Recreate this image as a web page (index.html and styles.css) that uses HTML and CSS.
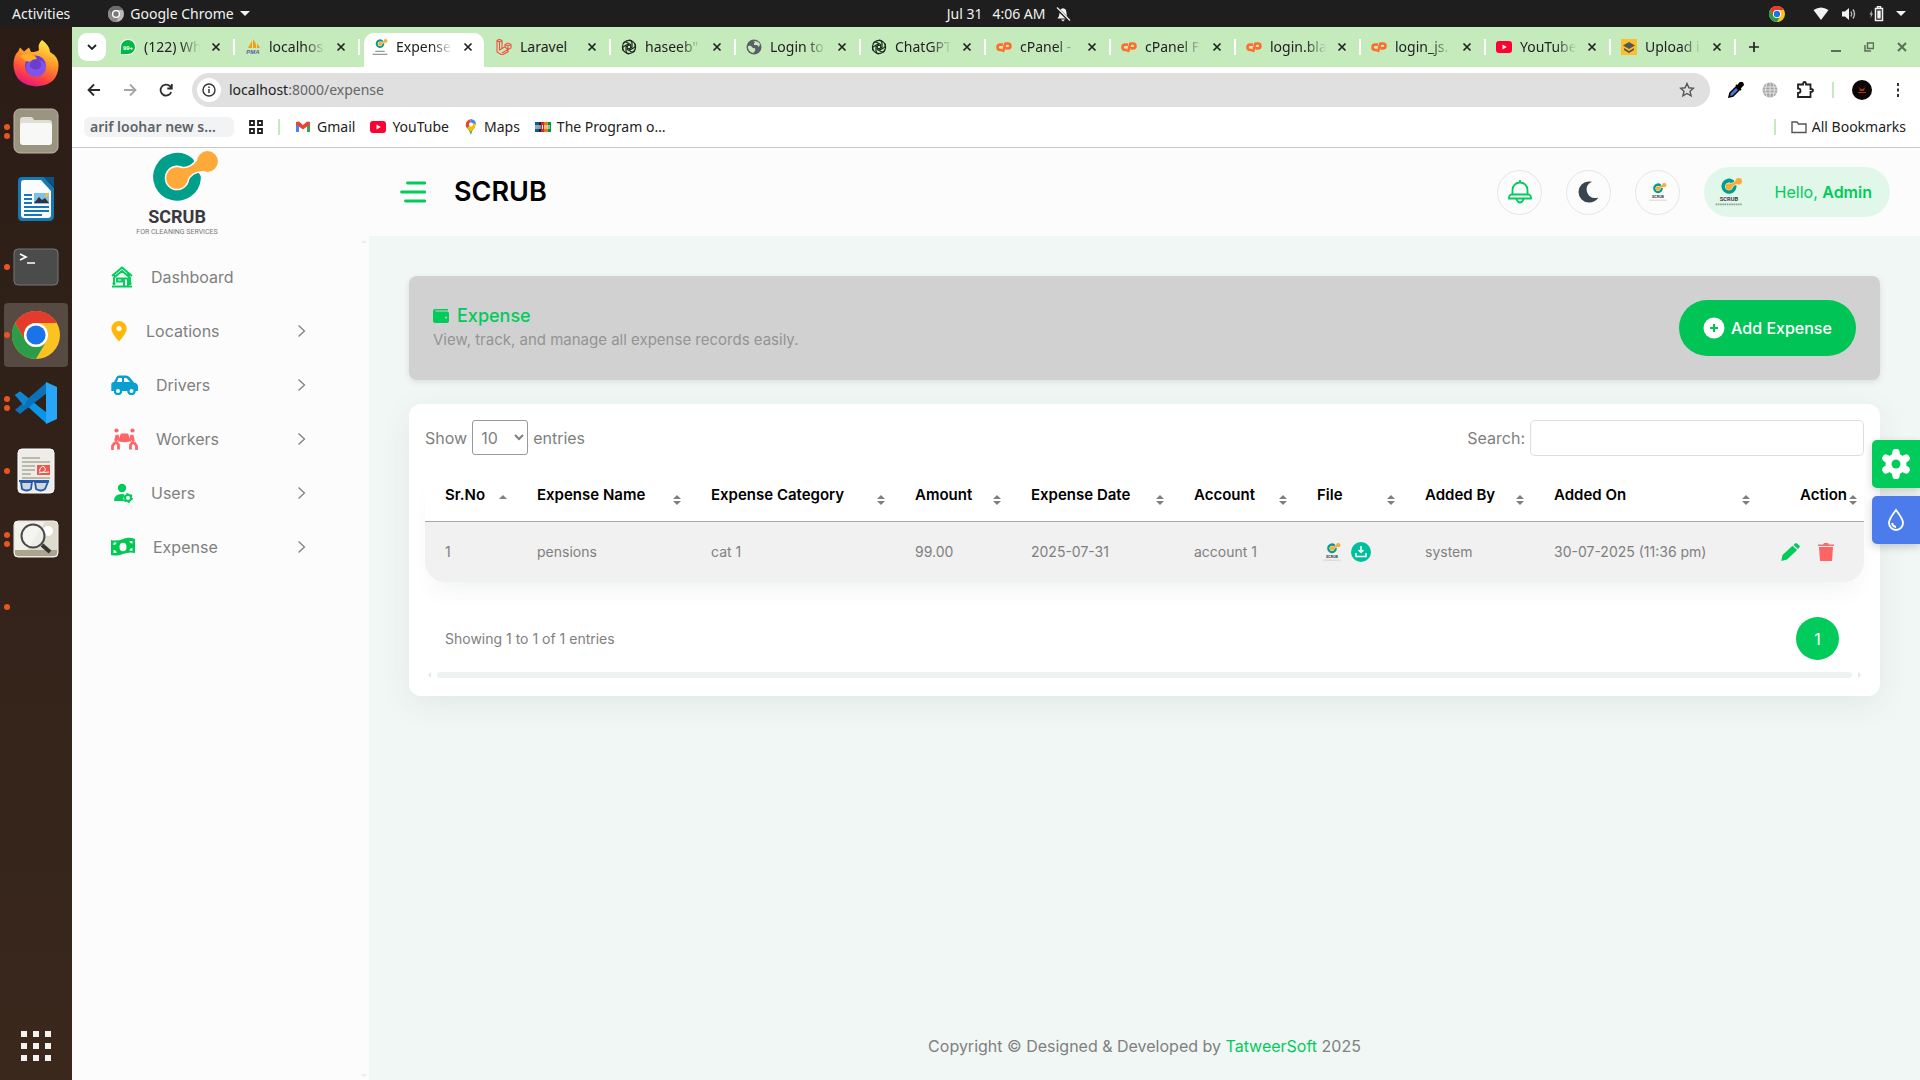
FILE: index.html
```html
<!DOCTYPE html>
<html lang="en">
<head>
<meta charset="utf-8">
<title>Expense</title>
<link rel="stylesheet" href="styles.css">
</head>
<body>
<svg class="sprite" aria-hidden="true">
  <symbol id="mark" viewBox="0 0 88 62">
    <path d="M55 12A17.6 17.6 0 1 0 61.600 27" fill="none" stroke="#009f8b" stroke-width="12.600" stroke-linecap="round"/>
    <g fill="#fcfcfc" stroke="#fcfcfc" stroke-width="3"><circle cx="44" cy="27" r="10.800"/><path d="M48 17Q57 19 64.500 9L72 20Q58 19 54 30Z"/></g>
    <g fill="#ffa93a"><circle cx="44" cy="27" r="10.800"/><circle cx="74.500" cy="10.500" r="10.400"/><path d="M48 17Q57 19 64.500 9L72 20Q58 19 54 30Z"/></g>
  </symbol>
  <symbol id="chrome" viewBox="0 0 48 48">
    <circle cx="24" cy="24" r="24" fill="#fbc322"/>
    <path d="M24 12H44.800A24 24 0 0 0 3.200 12L13.600 30A12 12 0 0 1 24 12Z" fill="#e33b2e"/>
    <path d="M3.200 12A24 24 0 0 0 24 48L34.400 30A12 12 0 0 1 13.600 30Z" fill="#2c9c4a"/>
    <circle cx="24" cy="24" r="12" fill="#fff"/><circle cx="24" cy="24" r="9.600" fill="#1a73e8"/>
  </symbol>
  <symbol id="chrome-gray" viewBox="0 0 48 48">
    <circle cx="24" cy="24" r="24" fill="#b8b8b8"/>
    <path d="M24 12H44.800A24 24 0 0 0 3.200 12L13.600 30A12 12 0 0 1 24 12Z" fill="#6a6a6a"/>
    <path d="M3.200 12A24 24 0 0 0 24 48L34.400 30A12 12 0 0 1 13.600 30Z" fill="#888"/>
    <circle cx="24" cy="24" r="12" fill="#fff"/><circle cx="24" cy="24" r="8" fill="#777"/>
  </symbol>
  <symbol id="x" viewBox="0 0 16 16"><path d="M4.500 4.500l7 7m0-7l-7 7" stroke="#222" stroke-width="1.700"/></symbol>
  <symbol id="openai" viewBox="0 0 16 16">
    <g fill="none" stroke="#1d2b1d" stroke-width="1.200">
      <path id="petal" d="M8 1.200a3 3 0 0 1 3 2.900v4.200L8 10"/>
      <use href="#petal" transform="rotate(60 8 8)"/><use href="#petal" transform="rotate(120 8 8)"/><use href="#petal" transform="rotate(180 8 8)"/><use href="#petal" transform="rotate(240 8 8)"/><use href="#petal" transform="rotate(300 8 8)"/>
      <circle cx="8" cy="8" r="6.600"/>
    </g>
  </symbol>
  <symbol id="cpanel" viewBox="0 0 16 16">
    <g fill="none" stroke="#ff6c2c" stroke-width="2.600" stroke-linejoin="round"><path d="M7 5.600H4.200a2.600 2.600 0 0 0 0 5.400H6"/><path d="M7 13L9.300 4.500H12a2.400 2.400 0 0 1 0 4.900H9.500"/></g>
  </symbol>
  <symbol id="youtube" viewBox="0 0 16 16"><rect y="2" width="16" height="12" rx="3" fill="#ff0033"/><path d="M6.500 5.500v5L10.800 8z" fill="#fff"/></symbol>
  <symbol id="chev" viewBox="0 0 10 14"><path d="M1.500 1.500L7.500 7l-6 5.500" fill="none" stroke="#808080" stroke-width="1.300"/></symbol>
</svg>

<header class="topbar">
  <div class="topbar-left">
    <span>Activities</span>
    <span class="app-menu"><svg width="16" height="16"><use href="#chrome-gray"/></svg>Google Chrome<svg width="10" height="6" viewBox="0 0 10 6"><path d="M0 0h10L5 5z" fill="#f2f2f2"/></svg></span>
  </div>
  <div class="clock"><span>Jul 31</span><span>4:06 AM</span>
    <svg width="16" height="16" viewBox="0 0 16 16"><path d="M2.500 12.500Q4.500 10.500 4.500 7Q4.500 2.500 8 2.200Q11.500 2.500 11.500 7Q11.500 10.500 13.500 12.500Z" fill="#f2f2f2"/><path d="M6 13.500h4l-2 2z" fill="#f2f2f2"/><path d="M1 1.500l14 13.500" stroke="#1e1e1e" stroke-width="3"/><path d="M2 1.500l13 13" stroke="#f2f2f2" stroke-width="1.300"/></svg>
  </div>
  <div class="tray">
    <svg class="tray-chrome" width="16" height="16"><use href="#chrome"/></svg>
    <svg width="16" height="14" viewBox="0 0 16 14"><path d="M.5 3Q8-2 15.500 3L8 13z" fill="#f2f2f2"/></svg>
    <svg width="16" height="14" viewBox="0 0 16 14"><path d="M1 4.500h3L8 1v12L4 9.500H1z" fill="#f2f2f2"/><path d="M10 4.500q1.500 2.500 0 5M12 2.500q3 4.500 0 9" stroke="#bbb" fill="none" stroke-width="1.400"/></svg>
    <svg width="15" height="16" viewBox="0 0 15 16"><path d="M3 4L.5 8.500H2L1.500 12 4 7.500H2.500z" fill="#bbb"/><path d="M6.500 2.500h7v12h-7zM8.500.5h3v2h-3z" fill="none" stroke="#f2f2f2" stroke-width="1.500"/><path d="M8.300 4.500h3.400v8H8.300z" fill="#f2f2f2"/></svg>
    <svg width="10" height="6" viewBox="0 0 10 6"><path d="M0 0h10L5 5z" fill="#f2f2f2"/></svg>
  </div>
</header>

<div class="desktop">
<nav class="dock" aria-label="Dock">
  <div class="dock-item">
    <svg width="48" height="48" viewBox="0 0 48 48"><defs><linearGradient id="ff" x1=".7" y1="0" x2=".3" y2="1"><stop offset="0" stop-color="#fff04a"/><stop offset=".4" stop-color="#ff9a28"/><stop offset=".75" stop-color="#ff4040"/><stop offset="1" stop-color="#e0128a"/></linearGradient></defs>
      <path d="M30 1Q38 7 38 13Q47 18 46.500 27Q46 46 24.500 47.500Q3 46 1.500 27Q1 17 6.500 12L8 8.500L12 12.500L17 8.500L19 13Q25 13 27 11Q25.500 5 30 1Z" fill="url(#ff)"/><circle cx="23.500" cy="27" r="10.500" fill="#6a3fd0"/><path d="M8 17Q16 13 23 17L25 20Q20 20 18 23Q12 22 8 17Z" fill="#ffae2c"/><path d="M14 29q0-7 6-7q-5 5 1 8q6 2 8-3q1-4-3-6q9 1 8 9q-2 8-10 8t-10-9z" fill="#8b5cf0" opacity=".7"/></svg>
  </div>
  <div class="dock-item"><span class="dots"><i></i><i></i></span>
    <svg width="46" height="46" viewBox="0 0 46 46"><rect x="1" y="1" width="44" height="44" rx="6" fill="#9b9480" stroke="#bbb5a5"/><path d="M7 12q0-3 3-3h8q2 0 3 3h15q3 0 3 3v19H7z" fill="#e0ddd2"/><rect x="7" y="15" width="32" height="22" rx="3" fill="#f8f8f7"/></svg>
  </div>
  <div class="dock-item">
    <svg width="38" height="46" viewBox="0 0 38 46"><path d="M5 1h22l10 11v28q0 5-5 5H5q-4 0-4-5V5q0-4 4-4z" fill="#1479b5"/><path d="M27 1h10v10z" fill="#0c5385"/><path d="M4 7q0-3 3-3h17l10 11v24q0 3-3 3H7q-3 0-3-3z" fill="#fcfcfc"/><path d="M7 19h8M7 23h8M7 27h8M7 31h25M7 35h25M7 39h18" stroke="#1479b5" stroke-width="2"/><rect x="17" y="17" width="15" height="11" fill="#7cc1ed"/><path d="M17 27l5-6 3 3 3-2 4 5z" fill="#333"/><circle cx="30" cy="19" r="2" fill="#f6bd29"/></svg>
  </div>
  <div class="dock-item"><span class="dots"><i></i></span>
    <svg width="46" height="38" viewBox="0 0 46 38"><rect x="1" y="1" width="44" height="36" rx="4" fill="#4b4b4b" stroke="#777"/><path d="M7 6l6 3-6 3M14 15h8" stroke="#fff" stroke-width="1.700" fill="none"/></svg>
  </div>
  <div class="dock-item active"><span class="dots"><i></i></span><svg width="48" height="48"><use href="#chrome"/></svg></div>
  <div class="dock-item"><span class="dots"><i></i><i></i></span>
    <svg width="44" height="44" viewBox="0 0 44 44"><path d="M1 14l5-3.500L33 32v11z" fill="#0796e8"/><path d="M1 29l5 4L33 12V1z" fill="#0b72b8"/><path d="M1 14l5-3.500L14 17l-4 8z" fill="#0d87d2"/><path d="M32 1l11 5v32l-11 5z" fill="#27a7f5"/></svg>
  </div>
  <div class="dock-item"><span class="dots"><i></i></span>
    <svg width="38" height="46" viewBox="0 0 38 46"><rect x="1" y="1" width="36" height="44" rx="4" fill="#ececea" stroke="#fff"/><path d="M5 10h18M5 14h28M5 18h13M5 22h13M5 26h9M5 30h28" stroke="#bdb8a9" stroke-width="2"/><rect x="20" y="17" width="13" height="10" fill="#f2564a"/><path d="M22 25q8-1 6-5t-5 1 9 3" stroke="#fff" fill="none"/><path d="M2 33h30M4 34l1 7q5 3 9 0l1-7zM18 34l1 7q5 3 9 0l3-7z" fill="#cfd6dc" stroke="#2359a8" stroke-width="1.800"/></svg>
  </div>
  <div class="dock-item"><span class="dots"><i></i><i></i></span>
    <svg width="46" height="38" viewBox="0 0 46 38"><rect x="1" y="1" width="44" height="36" rx="4" fill="#dedccf" stroke="#f3f3ee"/><path d="M2 2h30L14 30H2z" fill="#f1f0e9"/><path d="M2 30h42v3q0 3-3 3H5q-3 0-3-3z" fill="#aaa58d"/><circle cx="35" cy="11" r="5" fill="#fff"/><circle cx="20" cy="16" r="11.500" fill="#f5f5f2" fill-opacity=".7" stroke="#4a4a4a" stroke-width="2"/><path d="M29 25l8 7" stroke="#333" stroke-width="4"/></svg>
  </div>
  <div class="dock-item"><span class="dots"><i></i></span></div>
  <button class="apps" aria-label="Show applications"><svg width="30" height="30" viewBox="0 0 30 30"><path d="M3 0v30M15 0v30M27 0v30" stroke="#f2f2f0" stroke-width="6" stroke-dasharray="6 6"/></svg></button>
</nav>

<div class="browser">
  <div class="tabstrip">
    <button class="tab-search" aria-label="Search tabs"><svg width="10" height="6" viewBox="0 0 10 6"><path d="M1 1l4 4 4-4" fill="none" stroke="#222" stroke-width="1.800"/></svg></button>
    <div class="tab"><svg width="16" height="16" viewBox="0 0 16 16"><circle cx="8" cy="8" r="8" fill="#fff"/><path d="M1 15V8a7 7 0 1 1 7 7z" fill="#00b944"/><text x="8" y="11" text-anchor="middle" class="fav-text">99+</text></svg><span>(122) Wh</span><svg width="16" height="16"><use href="#x"/></svg></div>
    <div class="tab"><svg width="16" height="16" viewBox="0 0 16 16"><path d="M3 9L7 2v7zM8 9V0q4 5 3 9zM12 9V4l3 5z" fill="#f89c0e"/><text x="8" y="15" text-anchor="middle" class="pma-text">PMA</text></svg><span>localhos</span><svg width="16" height="16"><use href="#x"/></svg></div>
    <div class="tab current"><svg width="16" height="16" viewBox="0 0 88 88"><use href="#mark" width="88" height="62"/><path d="M18 68h52M4 84h80" stroke="#999" stroke-width="7"/></svg><span>Expense</span><svg width="16" height="16"><use href="#x"/></svg></div>
    <div class="tab"><svg width="16" height="16" viewBox="0 0 16 16"><path d="M1 1.500L3.500.3 6 1.500v8L9 8V5.500l3-1.500 3 1.500V9l-3 1.600v2.200L6 16l-5-3zM1 1.500L3.500 3 6 1.500M3.500 3v8L6 9.500M9 5.500L12 7l3-1.500M12 7v3.500L6 14M9 8l3 2.500" fill="none" stroke="#f0513f" stroke-width="1.100"/></svg><span class="short">Laravel</span><svg width="16" height="16"><use href="#x"/></svg></div>
    <div class="tab"><svg width="16" height="16"><use href="#openai"/></svg><span>haseeb"</span><svg width="16" height="16"><use href="#x"/></svg></div>
    <div class="tab"><svg width="16" height="16" viewBox="0 0 16 16"><circle cx="8" cy="8" r="7.500" fill="#5a5f66"/><path d="M2 7q3-1 4 1t3 1q1 3-2 5q-4-1-5-5zM7 2q2 0 2 2H8v2h3l2 2 1-3Q12 2 8 2z" fill="#c5ebbd"/></svg><span>Login to</span><svg width="16" height="16"><use href="#x"/></svg></div>
    <div class="tab"><svg width="16" height="16"><use href="#openai"/></svg><span>ChatGPT</span><svg width="16" height="16"><use href="#x"/></svg></div>
    <div class="tab"><svg width="16" height="16"><use href="#cpanel"/></svg><span>cPanel -</span><svg width="16" height="16"><use href="#x"/></svg></div>
    <div class="tab"><svg width="16" height="16"><use href="#cpanel"/></svg><span>cPanel F</span><svg width="16" height="16"><use href="#x"/></svg></div>
    <div class="tab"><svg width="16" height="16"><use href="#cpanel"/></svg><span>login.bla</span><svg width="16" height="16"><use href="#x"/></svg></div>
    <div class="tab"><svg width="16" height="16"><use href="#cpanel"/></svg><span>login_js.</span><svg width="16" height="16"><use href="#x"/></svg></div>
    <div class="tab"><svg width="16" height="16"><use href="#youtube"/></svg><span>YouTube</span><svg width="16" height="16"><use href="#x"/></svg></div>
    <div class="tab"><svg width="16" height="16" viewBox="0 0 16 16"><rect width="16" height="16" fill="#fdbf2d"/><path d="M8 3l6 3.500L8 10 2 6.500zM3 9l5 3 5-3v2l-5 3-5-3z" fill="#555"/></svg><span>Upload i</span><svg width="16" height="16"><use href="#x"/></svg></div>
    <button class="new-tab" aria-label="New tab"><svg width="12" height="12" viewBox="0 0 12 12"><path d="M6 1v10M1 6h10" stroke="#222" stroke-width="1.700"/></svg></button>
    <div class="win-buttons">
      <svg width="10" height="10" viewBox="0 0 10 10"><path d="M0 9h10" stroke="#5b6e58" stroke-width="2"/></svg>
      <svg width="10" height="10" viewBox="0 0 10 10"><path d="M3.500 1h6v5.500h-6zM1 3v6h6" fill="none" stroke="#5b6e58" stroke-width="1.500"/></svg>
      <svg width="10" height="10" viewBox="0 0 10 10"><path d="M1 1l8 8m0-8L1 9" stroke="#5b6e58" stroke-width="2"/></svg>
    </div>
  </div>

  <div class="toolbar">
    <div class="nav-buttons">
      <svg width="16" height="16" viewBox="0 0 16 16"><path d="M14 8H3M8 2.500L2.500 8 8 13.500" fill="none" stroke="#2b2b2b" stroke-width="1.800"/></svg>
      <svg width="16" height="16" viewBox="0 0 16 16"><path d="M2 8h11M8 2.500L13.500 8 8 13.500" fill="none" stroke="#a6a6a6" stroke-width="1.800"/></svg>
      <svg width="16" height="16" viewBox="0 0 16 16"><path d="M13.200 10A5.500 5.500 0 1 1 12 4.200L13.500 6M13.800 2v4.500H9.300" fill="none" stroke="#2b2b2b" stroke-width="1.800"/></svg>
    </div>
    <div class="address">
      <span class="info"><svg width="14" height="14" viewBox="0 0 14 14"><circle cx="7" cy="7" r="6" fill="none" stroke="#333" stroke-width="1.400"/><path d="M7 6v4M7 3.500V5" stroke="#333" stroke-width="1.500"/></svg></span>
      <span class="url">localhost<span>:8000/expense</span></span>
      <svg width="16" height="16" viewBox="0 0 16 16"><path d="M8 1.500l1.900 4.300 4.600.4-3.500 3.100 1.100 4.600L8 11.500l-4.100 2.400L5 9.300 1.500 6.200l4.600-.4z" fill="none" stroke="#555" stroke-width="1.400"/></svg>
    </div>
    <div class="extensions">
      <svg width="16" height="16" viewBox="0 0 16 16"><path d="M1 15l1-4 6-6 3 3-6 6z" fill="#4a7be0" stroke="#000" stroke-width="1.500"/><path d="M8 3l5 5M9 5l3-4q3-1 3 2l-4 4z" stroke="#000" fill="#000" stroke-width="1.800"/></svg>
      <svg width="16" height="16" viewBox="0 0 16 16"><circle cx="8" cy="8" r="7.500" fill="#a5a5a5"/><path d="M1 5h14M0 8h16M1 11h14M8 0v16M5 1q-3 7 0 14M11 1q3 7 0 14" fill="none" stroke="#eee" stroke-width=".8"/></svg>
      <svg width="18" height="18" viewBox="0 0 18 18"><path d="M2 3.500h5q0-2.500 1.500-2.500T10 3.500h4.500V8q2.500 0 2.500 1.500T14.500 11v5H2v-4q2.500 0 2.500-2.300T2 7.500z" fill="none" stroke="#222" stroke-width="1.800"/></svg>
      <i class="bar"></i>
      <svg width="20" height="20" viewBox="0 0 20 20"><circle cx="10" cy="10" r="10" fill="#0b0604"/><path d="M7 7l2 2h2l2-2-1 4H8zM6 12h8v1H6z" fill="#a83418"/></svg>
      <svg width="16" height="16" viewBox="0 0 16 16"><path d="M7 1h2v3H7zM7 6.500h2v3H7zM7 12h2v3H7z" fill="#333"/></svg>
    </div>
  </div>

  <div class="bookmarks">
    <span class="chip">arif loohar new s…</span>
    <svg class="tab-grid" width="14" height="14" viewBox="0 0 14 14"><path d="M1 1h4v4H1zM9 1h4v4H9zM1 9h4v4H1zM9 9h4v4H9z" fill="none" stroke="#222" stroke-width="1.800"/></svg>
    <i class="bar"></i>
    <a href="#gmail"><svg width="16" height="16" viewBox="0 0 16 16"><path d="M1 3v10h3V6z" fill="#4285f4"/><path d="M15 3v10h-3V6z" fill="#34a853"/><path d="M1 3l3-.5L8 6l4-3.500L15 3v2.500L8 10.500 1 5.500z" fill="#ea4335"/></svg>Gmail</a>
    <a href="#youtube-home"><svg width="16" height="16"><use href="#youtube"/></svg>YouTube</a>
    <a href="#maps"><svg width="14" height="16" viewBox="0 0 14 16"><path d="M7 16Q6 12 3 9Q1 6 3 3L11 8Q8 11 7 16Z" fill="#34a853"/><path d="M2 4Q3 1 7 0L5 6 3 9Q1 7 2 4Z" fill="#ea4335"/><path d="M7 0Q12 1 12 5L8 8 6 3Z" fill="#4285f4"/><path d="M12 5q0 2-2 4L7 13 3 9 9 4Z" fill="#fbbc04"/><circle cx="7" cy="5.500" r="2" fill="#fff"/></svg>Maps</a>
    <a href="#program"><svg width="16" height="10" viewBox="0 0 16 10"><path d="M0 0h4v10H0z" fill="#075a9d"/><path d="M4 0h2v10H4z" fill="#222"/><path d="M6 0h3v10H6z" fill="#d22"/><path d="M9 0h4v10H9z" fill="#e67b17"/><path d="M13 0h3v10h-3z" fill="#099346"/><path d="M1 3v4M3 3v4M5 3v4M7.500 3v4M10 3v4M12 3v4M14 3v4" stroke="#fff"/></svg>The Program o…</a>
    <i class="bar push"></i>
    <a class="all" href="#all"><svg width="16" height="16" viewBox="0 0 16 16"><path d="M1 3h5l1.500 2H15v8.500H1z" fill="none" stroke="#555" stroke-width="1.400"/></svg>All Bookmarks</a>
  </div>

  <div class="app">
    <aside class="sidebar">
      <a class="brand" href="#home" aria-label="Scrub"><svg width="88" height="84" viewBox="0 0 88 84"><use href="#mark" width="88" height="62"/><text x="44" y="72" text-anchor="middle" class="logo-name">SCRUB</text><text x="44" y="83" text-anchor="middle" class="logo-tag">FOR CLEANING SERVICES</text></svg></a>
      <ul class="menu">
        <li><a href="#dashboard"><svg width="22" height="22" viewBox="0 0 22 22"><path d="M1 10L11 1.500 21 10M2.500 12L11 5l8.500 7M3 12v7M19 12v7M1 20.500h20M1.500 17.500h3M17.500 17.500h3M6 12.500h5v3H6zM13 19.500v-7h4v7M3 9l2 1M16 8l3 1" fill="none" stroke="#00cb5b" stroke-width="1.900"/></svg>Dashboard</a></li>
        <li><a href="#locations"><svg width="17" height="22" viewBox="0 0 17 22"><path d="M8 1a7.700 7.700 0 0 1 7.700 7.700Q15.700 13 8 21.500 .3 13 .3 8.700A7.700 7.700 0 0 1 8 1zm0 5a2.600 2.600 0 1 0 .01 0z" fill="#ffb80a"/></svg>Locations<svg class="chev" width="10" height="14"><use href="#chev"/></svg></a></li>
        <li><a href="#drivers"><svg width="27" height="20" viewBox="0 0 27 20"><path fill-rule="evenodd" d="M5.500 2Q6 .5 8 .5h7q2 0 3.500 1.500L23 7.500q4 .5 4 4.500v4h-2.500a4 4 0 0 1-8 0H11a4 4 0 0 1-8 0H.300V9q0-2 2.700-2zM7.500 3L5.800 7H11V3zM13 3v4h6l-3.500-4z" fill="#08a0d0"/><circle cx="7" cy="16" r="3" fill="#fff" stroke="#08a0d0" stroke-width="2"/><circle cx="20.500" cy="16" r="3" fill="#fff" stroke="#08a0d0" stroke-width="2"/></svg>Drivers<svg class="chev" width="10" height="14"><use href="#chev"/></svg></a></li>
        <li><a href="#workers"><svg width="27" height="22" viewBox="0 0 27 22"><g fill="#ff6467"><circle cx="5.500" cy="2.500" r="2.100"/><circle cx="21.500" cy="2.500" r="2.100"/><path d="M10 5.500h7l1 2v6q-4.500 1.500-9 0v-6z"/></g><path d="M6 7L4.500 13M4.500 13L7.500 17v4.500M4 14.500L1.500 18v4M6 7L8 12h3M21 7l1.500 6M22.500 13L19.500 17v4.500M23 14.500l2.500 3.500v4M21 7l-2 5h-3" fill="none" stroke="#ff6467" stroke-width="2.800"/></svg>Workers<svg class="chev" width="10" height="14"><use href="#chev"/></svg></a></li>
        <li><a href="#users"><svg width="22" height="20" viewBox="0 0 22 20"><circle cx="11" cy="5" r="4.200" fill="#00cb5b"/><path d="M3 18q0-7 8-7 1.500 0 2.500.300-2 3.200-.5 6.700z" fill="#00cb5b"/><circle cx="17" cy="15" r="3" fill="none" stroke="#00cb5b" stroke-width="2"/><circle cx="17" cy="15" r="4.200" fill="none" stroke="#00cb5b" stroke-width="1.400" stroke-dasharray="2.200"/></svg>Users<svg class="chev" width="10" height="14"><use href="#chev"/></svg></a></li>
        <li><a href="#expense"><svg width="24" height="20" viewBox="0 0 24 20"><path d="M0 3q6 1.500 12-1 6-2.500 12 0v14q-6-1.500-12 1-6 2.500-12 1z" fill="#00c853"/><ellipse cx="12" cy="10" rx="3.500" ry="4.200" fill="#fff"/><path d="M2.500 5.500h3q0 2-3 2.500zM2.500 16v-3q3 0 3 3zM21.500 4h-3q0 2.500 3 2.500zM21.500 14v-3q-3 0-3 2.500z" fill="#fff"/></svg>Expense<svg class="chev" width="10" height="14"><use href="#chev"/></svg></a></li>
      </ul>
      <div class="rail"><svg width="6" height="3" viewBox="0 0 6 3"><path d="M0 3l3-3 3 3z" fill="#e8eeec"/></svg><svg width="6" height="3" viewBox="0 0 6 3"><path d="M0 0l3 3 3-3z" fill="#e8eeec"/></svg></div>
    </aside>

    <div class="page">
      <header class="page-head">
        <button class="burger" aria-label="Toggle menu"><svg width="26" height="22" viewBox="0 0 26 22"><path d="M7.500 2H25M1.500 11H25M5.500 20H25" stroke="#00cb5b" stroke-width="2.800" stroke-linecap="round"/></svg></button>
        <h1>SCRUB</h1>
        <div class="head-tools">
          <button class="round" aria-label="Notifications"><svg width="24" height="24" viewBox="0 0 24 24"><path d="M12 0v3M4.500 14.500V10a7.500 7.500 0 0 1 15 0v4.500M3 14.500h18q2 1 2 3v1H1v-1q0-2 2-3zM8.500 19q1 3.500 3.500 3.500t3.500-3.500" fill="none" stroke="#00cb5b" stroke-width="1.800"/></svg></button>
          <button class="round" aria-label="Dark mode"><svg width="22" height="22" viewBox="0 0 22 22"><path d="M14 .8Q7 4 9 11q3 8 11.500 5.500Q17 21.500 11 21.500A10.500 10.500 0 0 1 11 .5Q13 .4 14 .8Z" fill="#36454f"/></svg></button>
          <button class="round" aria-label="Company"><svg width="18" height="18" viewBox="0 0 88 88"><use href="#mark" width="88" height="62"/><text x="44" y="74" text-anchor="middle" class="logo-name">SCRUB</text><path d="M2 84h84" stroke="#ccc" stroke-width="4"/></svg></button>
          <a class="profile" href="#profile"><svg width="28" height="28" viewBox="0 0 88 88"><use href="#mark" width="88" height="62"/><text x="44" y="73" text-anchor="middle" class="logo-name">SCRUB</text><path d="M2 83h84" stroke="#8aa195" stroke-width="5" stroke-dasharray="5 2"/></svg><span>Hello, <b>Admin</b></span></a>
        </div>
      </header>

      <main>
        <section class="banner">
          <div>
            <h2><svg width="16" height="14" viewBox="0 0 16 14"><path d="M2 0h13v1.500H2.500V2.500H14q2 0 2 2V12q0 2-2 2H2q-2 0-2-2V2q0-2 2-2z" fill="#00cb5b"/><circle cx="13" cy="8.500" r="1" fill="#d1d1d1"/></svg>Expense</h2>
            <p>View, track, and manage all expense records easily.</p>
          </div>
          <button class="add"><svg width="22" height="22" viewBox="0 0 22 22"><circle cx="11" cy="11" r="10.500" fill="#fff"/><path d="M11 7v8M7 11h8" stroke="#00c556" stroke-width="2"/></svg>Add Expense</button>
        </section>

        <section class="card">
          <div class="controls">
            <label>Show <select><option>10</option><option>25</option></select> entries</label>
            <label>Search: <input type="search"></label>
          </div>
          <div class="table-wrap">
          <table>
            <colgroup><col class="c92"><col class="c174"><col class="c204"><col class="c116"><col class="c163"><col class="c123"><col class="c108"><col class="c129"><col class="c226"><col class="c104"></colgroup>
            <thead><tr>
              <th class="asc">Sr.No</th><th>Expense Name</th><th>Expense Category</th><th>Amount</th><th>Expense Date</th><th>Account</th><th>File</th><th>Added By</th><th>Added On</th><th class="last">Action</th>
            </tr></thead>
            <tbody><tr>
              <td>1</td><td>pensions</td><td>cat 1</td><td>99.00</td><td>2025-07-31</td><td>account 1</td>
              <td><span class="file"><svg width="18" height="18" viewBox="0 0 88 88"><use href="#mark" width="88" height="62"/><text x="44" y="74" text-anchor="middle" class="logo-name">SCRUB</text><path d="M2 84h84" stroke="#ccc" stroke-width="4"/></svg><svg width="20" height="20" viewBox="0 0 20 20"><circle cx="10" cy="10" r="10" fill="#00bf9c"/><path d="M10 4v6M7.500 8l2.500 2.500L12.500 8M5 11v3.500h10V11" fill="none" stroke="#fff" stroke-width="1.500"/></svg></span></td>
              <td>system</td><td>30-07-2025 (11:36 pm)</td>
              <td class="last"><span class="actions"><button aria-label="Edit"><svg width="19" height="18" viewBox="0 0 19 18"><path d="M1.500 12L11.500 2.800l4.600 4.200L6 16.500.3 18zM12.500 2l1.500-1.500q1-.800 2 0l2.300 2q1 1 0 2L17 6z" fill="#00cb5b"/></svg></button><button aria-label="Delete"><svg width="16" height="18" viewBox="0 0 16 18"><path d="M0 1.500h5L6 0h4l1 1.500h5V3H0z" fill="#ff6b6b"/><path d="M1 4h14l-1 14H2z" fill="#ff6464"/></svg></button></span></td>
            </tr></tbody>
          </table>
          </div>
          <div class="table-foot"><span>Showing 1 to 1 of 1 entries</span><button class="page-no">1</button></div>
          <div class="hscroll"><svg width="3" height="6" viewBox="0 0 3 6"><path d="M3 0v6L0 3z" fill="#e2e8e6"/></svg><i></i><svg width="3" height="6" viewBox="0 0 3 6"><path d="M0 0v6l3-3z" fill="#e2e8e6"/></svg></div>
        </section>
      </main>
      <footer>Copyright © Designed &amp; Developed by <a href="#tatweersoft">TatweerSoft</a> 2025</footer>
      <div class="side-tools">
        <button class="gear" aria-label="Settings"><svg width="30" height="30" viewBox="0 0 30 30"><path d="M15 3.500v23M5 9.200l20 11.600M5 20.800L25 9.200" stroke="#fff" stroke-width="7.500" stroke-linecap="round"/><circle cx="15" cy="15" r="10.500" fill="#fff"/><circle cx="15" cy="15" r="4.500" fill="#00cb5b"/></svg></button>
        <button class="drop" aria-label="Theme colour"><svg width="18" height="24" viewBox="0 0 18 24"><path d="M9 2Q2 11 2 15a7 7 0 0 0 14 0Q16 11 9 2zM5 15q.5 3.500 4 4" fill="none" stroke="#fff" stroke-width="1.800"/></svg></button>
      </div>
    </div>
  </div>
</div>
</div>
</body>
</html>
```
FILE: styles.css
```css
* { box-sizing: border-box; }
body { margin: 0; min-height: 100vh; display: flex; flex-direction: column; font: 14px/20px "Noto Sans", sans-serif; color: #222; background: #fff; }
button { border: 0; padding: 0; background: none; font: inherit; color: inherit; }
a { color: inherit; text-decoration: none; }
svg { flex: none; display: block; }
.sprite { position: absolute; width: 0; height: 0; }
.logo-name { font: 700 18px "Liberation Sans Narrow", Roboto, sans-serif; fill: #3a3a3c; }
.logo-tag { font: 7px Roboto, sans-serif; fill: #77787a; }
.fav-text { font: 700 6px "Liberation Sans", sans-serif; fill: #fff; }
.pma-text { font: italic 700 6px "Liberation Sans", sans-serif; fill: #5c5f9e; }

.topbar { height: 27px; background: #1e1e1e; color: #f2f2f2; display: grid; grid-template-columns: 112fr auto 100fr; align-items: center; padding: 0 14px 0 12px; }
.topbar-left, .app-menu, .clock, .tray { display: flex; align-items: center; }
.topbar-left { gap: 38px; }
.app-menu { gap: 6px; }
.clock { gap: 10px; }
.tray { justify-content: flex-end; gap: 12px; }
.tray-chrome { margin-right: 16px; }

.desktop { flex: 1; display: flex; }
.dock { width: 72px; background: linear-gradient(#2b1d16, #3a281d); display: flex; flex-direction: column; padding: 4px 4px 19px; gap: 4px; }
.dock-item { height: 64px; border-radius: 4px; display: flex; align-items: center; justify-content: center; position: relative; }
.dock-item.active { background: #574a42; }
.dots { position: absolute; left: 0; top: 0; height: 100%; display: flex; flex-direction: column; justify-content: center; gap: 3px; }
.dots i { width: 6px; height: 6px; border-radius: 50%; background: #e95420; }
.apps { margin: auto auto 0; }

.browser { flex: 1; min-width: 0; display: flex; flex-direction: column; }
.tabstrip { height: 40px; background: #c5ebbd; display: flex; align-items: center; padding-left: 6px; }
.tab-search { width: 28px; height: 28px; background: #fff; border-radius: 9px; display: grid; place-items: center; margin-right: 4px; }
.tab { flex: 0 1 125px; min-width: 0; display: flex; align-items: center; padding: 0 11px 6px 10px; position: relative; height: 34px; margin-top: 6px; }
.tab::after { content: ""; position: absolute; right: 0; top: 6px; width: 2px; height: 16px; background: #fff; }
.tab.current::after { display: none; }
.tab.current { background: #fff; border-radius: 10px 10px 0 0; margin: 6px 2px 0 4px; flex-basis: 120px; padding: 0 8px 6px; }
.tab span { flex: 1; min-width: 0; margin: 0 4px 0 8px; white-space: nowrap; mask-image: linear-gradient(90deg, #000 60%, transparent 94%); }
.tab span.short { mask-image: none; }
.new-tab { margin-left: 12px; }
.win-buttons { margin-left: auto; display: flex; gap: 23px; padding-right: 13px; }

.toolbar { height: 46px; display: flex; align-items: center; padding: 0 14px; }
.nav-buttons { display: flex; gap: 20px; margin-right: 18px; }
.address { flex: 1; height: 34px; background: #e0e0e0; border-radius: 17px; display: flex; align-items: center; padding: 0 15px 0 5px; }
.info { width: 24px; height: 24px; border-radius: 50%; background: #fff; display: grid; place-items: center; margin-right: 8px; }
.url { flex: 1; }
.url span { color: #666; }
.extensions { display: flex; align-items: center; gap: 18px; margin-left: 18px; }
.bar { width: 2px; height: 16px; background: #c5ebbd; }
.bookmarks { height: 35px; border-bottom: 1px solid #c8c8c8; display: flex; align-items: center; padding: 0 14px 6px 12px; gap: 15px; }
.bookmarks a { display: flex; align-items: center; gap: 6px; }
.bookmarks .all { gap: 5px; }
.chip { width: 150px; border-radius: 6px; background: #f1f3f4; color: #5f6368; font-weight: 600; padding: 0 6px; white-space: nowrap; }
.push { margin-left: auto; }

.app { flex: 1; display: flex; font: 16px/24px Inter, sans-serif; color: #808080; }
.sidebar { width: 297px; background: #fcfcfc; display: grid; grid-template: auto 1fr / 1fr 8px; }
.brand { padding: 3px 61px 0; }
.menu { list-style: none; margin: 15px 0 0; padding: 0 0 0 39px; grid-row: 2; }
.menu a { height: 54px; display: flex; align-items: center; gap: 18px; }
.chev { margin: 0 54px 0 auto; }
.rail { grid-row: 2; grid-column: 2; display: flex; flex-direction: column; justify-content: space-between; padding: 5px 0 3px; }

.page { flex: 1; min-width: 0; background: #f1f7f5; display: flex; flex-direction: column; position: relative; }
.page-head { height: 88px; background: #fcfcfc; display: flex; align-items: center; padding: 0 30px 0 31px; }
h1 { margin: 0 0 0 28px; font-size: 27px; line-height: 32px; font-weight: 600; color: #000; }
.head-tools { margin-left: auto; display: flex; align-items: center; gap: 24px; }
.round { width: 45px; height: 45px; border: 1px solid #e6e6e6; border-radius: 50%; display: grid; place-items: center; }
.profile { height: 50px; border-radius: 25px; background: #e1f7ea; color: #00cb5b; display: flex; align-items: center; justify-content: space-between; width: 186px; padding: 0 18px 0 11px; }
.profile b { font-weight: 600; }

main { flex: 1; padding: 40px; display: flex; flex-direction: column; gap: 24px; }
.banner { background: #d1d1d1; border-radius: 8px; padding: 24px; display: flex; align-items: center; justify-content: space-between; box-shadow: 0 2px 6px rgba(0,0,0,.1); }
h2 { margin: 0; font-size: 18px; line-height: 24px; font-weight: 500; color: #00cb5b; display: flex; align-items: center; gap: 8px; }
.banner p { margin: 0; font-size: 15px; color: #949494; }
.add { width: 177px; height: 56px; border-radius: 28px; background: #00c556; color: #fff; font-weight: 500; display: flex; align-items: center; justify-content: center; gap: 6px; }

.card { background: #fff; border-radius: 12px; padding: 16px 16px 18px; box-shadow: 0 8px 32px rgba(20,60,40,.07); }
.controls { display: flex; justify-content: space-between; align-items: flex-start; height: 46px; }
.controls label { display: flex; align-items: center; gap: 5px; }
.controls select { width: 56px; height: 35px; border: 1px solid #999; border-radius: 3px; background: #fff; color: #808080; font: inherit; padding: 0 4px; }
.controls input { width: 334px; height: 36px; border: 1px solid #dedede; border-radius: 5px; background: #fff; }
.table-wrap { border-radius: 20px; box-shadow: 0 16px 24px -8px rgba(20,60,40,.06); overflow: hidden; }
table { width: 100%; table-layout: fixed; border-collapse: collapse; font-size: 14px; line-height: 20px; }
.c92 { width: 92px; } .c174 { width: 174px; } .c204 { width: 204px; } .c116 { width: 116px; } .c163 { width: 163px; }
.c123 { width: 123px; } .c108 { width: 108px; } .c129 { width: 129px; } .c226 { width: 226px; } .c104 { width: 104px; }
th, td { padding: 0 0 0 20px; text-align: left; white-space: nowrap; }
th { height: 55px; padding-top: 4px; font-size: 15px; color: #000; font-weight: 600; border-bottom: 1px solid #a8a8a8; position: relative; }
th::before, th::after { content: ""; position: absolute; right: 10px; border: 4px solid transparent; }
th::before { top: 25px; border-bottom-color: #808080; }
th::after { top: 35px; border-top-color: #808080; }
th.asc::after { display: none; }
th.last { text-align: right; padding-right: 17px; }
th.last::before, th.last::after { right: 7px; }
td { height: 61px; background: #f1f1f1; }
.file { display: flex; align-items: center; gap: 10px; padding-left: 6px; }
td.last { padding: 0 30px 0 0; }
.actions { display: flex; justify-content: flex-end; gap: 18px; }
.table-foot { display: flex; align-items: center; justify-content: space-between; padding: 35px 25px 12px 20px; font-size: 14px; }
.page-no { width: 43px; height: 43px; border-radius: 50%; background: #00cb5b; color: #fff; font-size: 16px; }
.hscroll { display: flex; align-items: center; gap: 6px; padding: 0 3px; }
.hscroll i { flex: 1; height: 6px; border-radius: 3px; background: #eef2f2; }
footer { text-align: center; padding-bottom: 22px; }
footer a { color: #00cb5b; }
.side-tools { position: absolute; right: 0; top: 292px; display: flex; flex-direction: column; gap: 8px; }
.side-tools button { width: 48px; height: 48px; border-radius: 5px 0 0 5px; display: grid; place-items: center; box-shadow: 0 3px 8px rgba(0,0,0,.18); }
.gear { background: #00cb5b; }
.drop { background: #4c7cec; }
```
